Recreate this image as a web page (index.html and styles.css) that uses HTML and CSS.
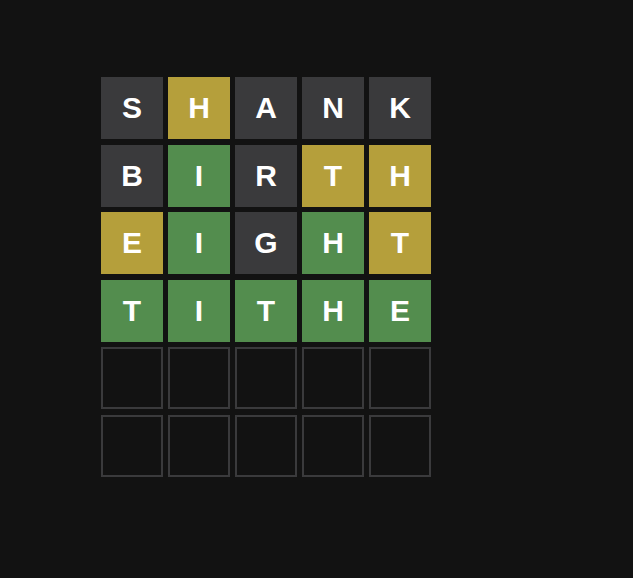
FILE: index.html
```html
<!DOCTYPE html>
<html>
<head>
<meta charset="utf-8">
<link rel="stylesheet" href="styles.css">
</head>
<body>
<main class="board">
  <div class="tile absent">S</div><div class="tile present">H</div><div class="tile absent">A</div><div class="tile absent">N</div><div class="tile absent">K</div>
  <div class="tile absent">B</div><div class="tile correct">I</div><div class="tile absent">R</div><div class="tile present">T</div><div class="tile present">H</div>
  <div class="tile present">E</div><div class="tile correct">I</div><div class="tile absent">G</div><div class="tile correct">H</div><div class="tile present">T</div>
  <div class="tile correct">T</div><div class="tile correct">I</div><div class="tile correct">T</div><div class="tile correct">H</div><div class="tile correct">E</div>
  <div class="tile empty"></div><div class="tile empty"></div><div class="tile empty"></div><div class="tile empty"></div><div class="tile empty"></div>
  <div class="tile empty"></div><div class="tile empty"></div><div class="tile empty"></div><div class="tile empty"></div><div class="tile empty"></div>
</main>
</body>
</html>
```
FILE: styles.css
```css
html, body {
  margin: 0;
  background: #121212;
  height: 100%;
}
body {
  padding: 77px 0 0 101px;
  box-sizing: border-box;
}
.board {
  display: grid;
  grid-template-columns: repeat(5, 62px);
  grid-auto-rows: 62px;
  column-gap: 5px;
  row-gap: 5.6px;
}
.tile {
  display: flex;
  align-items: center;
  justify-content: center;
  font-family: "Liberation Sans", Arial, sans-serif;
  font-weight: bold;
  font-size: 30px;
  color: #ffffff;
  box-sizing: border-box;
}
.absent { background: #3a3a3c; }
.present { background: #b59f3b; }
.correct { background: #538d4e; }
.empty {
  border: 2px solid #3a3a3c;
}
```
